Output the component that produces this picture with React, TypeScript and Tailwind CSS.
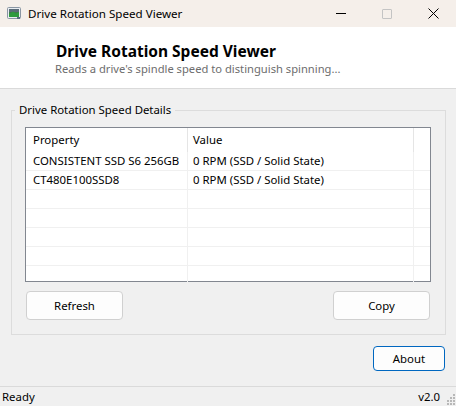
const rows = [
  { name: 'CONSISTENT SSD S6 256GB', value: '0 RPM (SSD / Solid State)' },
  { name: 'CT480E100SSD8', value: '0 RPM (SSD / Solid State)' },
  { name: '', value: '' },
  { name: '', value: '' },
  { name: '', value: '' },
  { name: '', value: '' },
  { name: '', value: '' },
]

function AppIcon() {
  return (
    <svg width="14" height="13" viewBox="0 0 14 13">
      <rect x="0.5" y="0.5" width="13" height="11" rx="1" fill="#e9edf1" stroke="#8a96a3" />
      <rect x="2" y="2" width="10" height="8" fill="#3f7a4a" />
      <rect x="2" y="2" width="10" height="3" fill="#5b6b78" />
      <path d="M2 7 L6 4.5 L9 6.5 L12 5 L12 10 L2 10 Z" fill="#2f9a3e" />
      <rect x="10" y="10" width="3" height="2" fill="#5a6b80" />
    </svg>
  )
}

function Grip() {
  const dots = [
    [6, 0],
    [3, 3], [6, 3],
    [0, 6], [3, 6], [6, 6],
    [0, 9], [3, 9], [6, 9],
  ]
  return (
    <svg width="8" height="11" viewBox="0 0 8 11" className="self-end mb-[1px] shrink-0">
      {dots.map(([x, y], i) => (
        <rect key={i} x={x} y={y} width="2" height="2" fill="#b8b8b8" />
      ))}
    </svg>
  )
}

export default function App() {
  return (
    <div
      className="w-[456px] h-[406px] flex flex-col bg-[#f0f0f0] text-[11.4px] text-black overflow-hidden"
      style={{ fontFamily: '"Noto Sans", "Open Sans", sans-serif' }}
    >
      {/* title bar */}
      <div className="h-[27px] flex items-center bg-[#f5efea] shrink-0">
        <div className="pl-[7px] pr-[7px] flex items-center">
          <AppIcon />
        </div>
        <span className="text-[11.6px] leading-none">Drive Rotation Speed Viewer</span>
        <div className="ml-auto flex items-center h-full">
          <div className="w-[46px] h-full flex items-center justify-center">
            <div className="w-[10px] h-px bg-black" />
          </div>
          <div className="w-[46px] h-full flex items-center justify-center">
            <div className="w-[10px] h-[10px] border border-[#c4c4c4] rounded-[1px]" />
          </div>
          <div className="w-[46px] h-full flex items-center justify-center">
            <svg width="11" height="11" viewBox="0 0 11 11">
              <path d="M0.5 0.5 L10.5 10.5 M10.5 0.5 L0.5 10.5" stroke="#000" strokeWidth="1" />
            </svg>
          </div>
        </div>
      </div>

      {/* header */}
      <div className="h-[62px] bg-white border-b border-[#dadada] shrink-0 pl-[56px] pt-[14px]">
        <div className="text-[15.5px] font-bold leading-[20px]">Drive Rotation Speed Viewer</div>
        <div className="text-[11.2px] leading-[16px] text-[#6d6d6d] -ml-[1px]">
          Reads a drive's spindle speed to distinguish spinning...
        </div>
      </div>

      {/* body */}
      <div className="flex-1 flex flex-col px-[10px] pt-[13px]">
        <fieldset className="border border-[#dcdcdc] h-[233px] pl-[13px] pr-[14px] pb-[14px] flex flex-col ml-px">
          <legend className="-ml-[10px] px-[4px] leading-[16px]">Drive Rotation Speed Details</legend>

          <div className="mt-[9px] h-[155px] border border-[#828790] bg-white flex flex-col">
            <div className="h-[24px] flex shrink-0">
              <div className="w-[162px] pl-[7px] flex items-center border-r border-[#e5e5e5]">Property</div>
              <div className="w-[226px] pl-[5px] flex items-center border-r border-[#e5e5e5]">Value</div>
            </div>
            {rows.map((r, i) => (
              <div key={i} className="h-[19px] flex shrink-0 border-b border-[#f0f0f0]">
                <div className="w-[162px] pl-[7px] flex items-center border-r border-[#f0f0f0] whitespace-nowrap">
                  {r.name}
                </div>
                <div className="w-[226px] pl-[5px] flex items-center border-r border-[#f0f0f0] whitespace-nowrap">
                  {r.value}
                </div>
              </div>
            ))}
          </div>

          <div className="flex justify-between mt-[9px]">
            <button className="w-[97px] h-[29px] bg-[#fdfdfd] border border-[#d0d0d0] rounded-[4px] ml-px">
              Refresh
            </button>
            <button className="w-[97px] h-[29px] bg-[#fdfdfd] border border-[#d0d0d0] rounded-[4px] mr-px">
              Copy
            </button>
          </div>
        </fieldset>

        <div className="flex justify-end mt-[11px] pr-px">
          <button className="w-[72px] h-[25px] bg-[#fdfdfd] border border-[#0067c0] rounded-[4px]">
            About
          </button>
        </div>
      </div>

      {/* status bar */}
      <div className="h-[20px] border-t border-[#dadada] flex items-center shrink-0 pl-[2px] pr-px">
        <span>Ready</span>
        <span className="ml-auto mr-[7px]">v2.0</span>
        <Grip />
      </div>
    </div>
  )
}
